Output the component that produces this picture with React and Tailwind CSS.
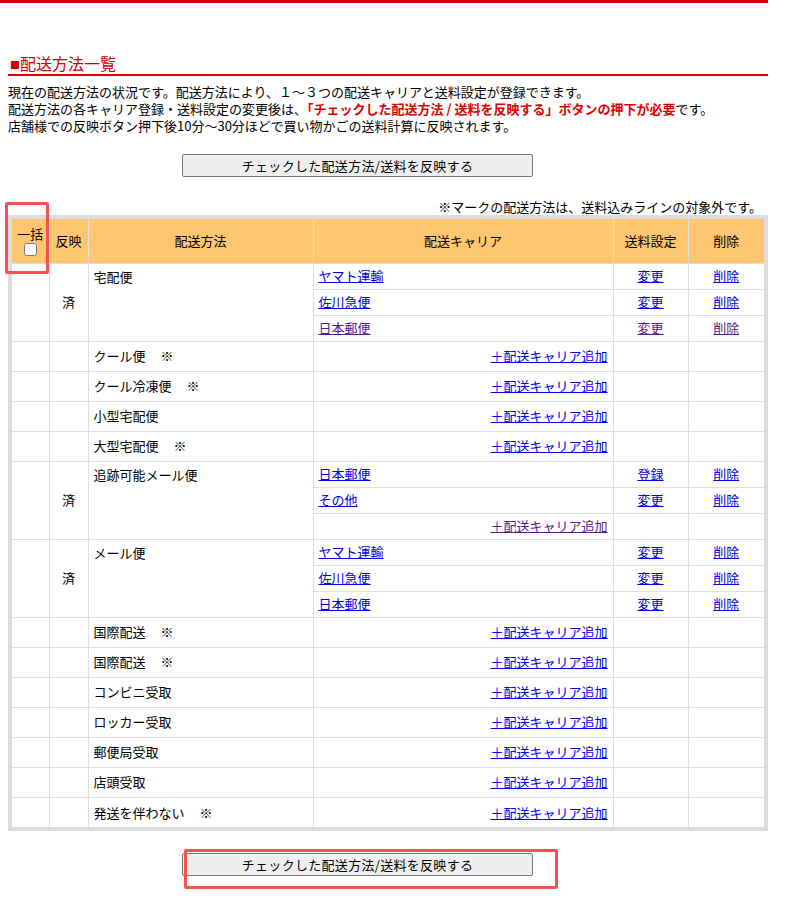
import React from 'react';

const JP = "font-['Meiryo','Noto_Sans_CJK_JP',sans-serif]";

const ROWS = [
  { name: '宅配便', done: true, carriers: [
    { label: 'ヤマト運輸', fee: '変更' },
    { label: '佐川急便', fee: '変更' },
    { label: '日本郵便', fee: '変更', visited: true },
  ] },
  { name: 'クール便', mark: true },
  { name: 'クール冷凍便', mark: true },
  { name: '小型宅配便' },
  { name: '大型宅配便', mark: true },
  { name: '追跡可能メール便', done: true, carriers: [
    { label: '日本郵便', fee: '登録' },
    { label: 'その他', fee: '変更' },
    { add: true, visited: true },
  ] },
  { name: 'メール便', done: true, carriers: [
    { label: 'ヤマト運輸', fee: '変更' },
    { label: '佐川急便', fee: '変更' },
    { label: '日本郵便', fee: '変更' },
  ] },
  { name: '国際配送', mark: true },
  { name: '国際配送', mark: true },
  { name: 'コンビニ受取' },
  { name: 'ロッカー受取' },
  { name: '郵便局受取' },
  { name: '店頭受取' },
  { name: '発送を伴わない', mark: true },
];

const cell = 'border border-[#dddddd] px-[5px]';

function Link({ children, visited }) {
  return (
    <a href="#" className={`underline ${visited ? 'text-[#551a8b]' : 'text-[#0000ee]'}`}>
      {children}
    </a>
  );
}

function MethodName({ row }) {
  return (
    <span>
      {row.name}
      {row.mark && <span className="ml-[15px]">※</span>}
    </span>
  );
}

function AddLink({ visited }) {
  return <Link visited={visited}>＋配送キャリア追加</Link>;
}

function GroupRows({ row }) {
  return row.carriers.map((c, i) => (
    <tr key={i} className="h-[26px]">
      {i === 0 && (
        <>
          <td rowSpan={3} className={cell}></td>
          <td rowSpan={3} className={`${cell} text-center`}>済</td>
          <td rowSpan={3} className={`${cell} align-top pt-[3px]`}>
            <MethodName row={row} />
          </td>
        </>
      )}
      {c.add ? (
        <>
          <td className={`${cell} text-right`}><AddLink visited={c.visited} /></td>
          <td className={cell}></td>
          <td className={cell}></td>
        </>
      ) : (
        <>
          <td className={cell}><Link visited={c.visited}>{c.label}</Link></td>
          <td className={`${cell} text-center`}><Link visited={c.visited}>{c.fee}</Link></td>
          <td className={`${cell} text-center`}><Link visited={c.visited}>削除</Link></td>
        </>
      )}
    </tr>
  ));
}

function SingleRow({ row }) {
  return (
    <tr className="h-[30px]">
      <td className={cell}></td>
      <td className={cell}></td>
      <td className={cell}><MethodName row={row} /></td>
      <td className={`${cell} text-right`}><AddLink /></td>
      <td className={cell}></td>
      <td className={cell}></td>
    </tr>
  );
}

function ApplyButton() {
  return (
    <button
      type="button"
      className="ml-[174px] w-[351px] h-[23px] bg-[#efefef] border border-[#767676] rounded-[2px] text-[13px] leading-none text-black tracking-[0.3px]"
    >
      チェックした配送方法/送料を反映する
    </button>
  );
}

export default function App() {
  return (
    <div className={`relative w-[787px] h-[899px] bg-white text-[13px] text-black ${JP}`}>
      <div className="w-[768px] h-[3px] bg-[#d40000]" />

      <div className="ml-[8px] w-[760px]">
        {/* heading */}
        <h2 className="mt-[51px] text-[16px] leading-[18px] text-[#d40000] pl-[2px] border-b-2 border-[#d40000]">
          <span className="text-[10px] align-[1px]">■</span>配送方法一覧
        </h2>

        <div className="mt-[7px] leading-[17px]">
          <p className="h-[17px]">現在の配送方法の状況です。配送方法により、１～３つの配送キャリアと送料設定が登録できます。</p>
          <p className="h-[17px]">
            配送方法の各キャリア登録・送料設定の変更後は、
            <span className="text-[#e00000] font-bold">「チェックした配送方法 / 送料を反映する」ボタンの押下が必要</span>
            です。
          </p>
          <p className="h-[17px]">店舗様での反映ボタン押下後10分～30分ほどで買い物かごの送料計算に反映されます。</p>
        </div>

        <div className="mt-[20px]">
          <ApplyButton />
        </div>

        <p className="mt-[21px] text-right pr-[6px] leading-[17px]">※マークの配送方法は、送料込みラインの対象外です。</p>

        {/* table */}
        <div className="border-4 border-[#dddddd]">
          <table className="w-full table-fixed border-collapse border-hidden">
            <colgroup>
              <col className="w-[37px]" />
              <col className="w-[39px]" />
              <col className="w-[225px]" />
              <col className="w-[300px]" />
              <col className="w-[75px]" />
              <col className="w-[76px]" />
            </colgroup>
            <thead>
              <tr className="h-[44px] bg-[#fdc66f]">
                <th className={`${cell} px-0 font-normal`}>
                  <div className="flex flex-col items-center leading-[15px] pt-[1px]">
                    <span>一括</span>
                    <input type="checkbox" className="w-[13px] h-[13px] mt-[2px]" />
                  </div>
                </th>
                <th className={`${cell} px-0 font-normal`}>反映</th>
                <th className={`${cell} font-normal`}>配送方法</th>
                <th className={`${cell} font-normal`}>配送キャリア</th>
                <th className={`${cell} px-0 font-normal`}>送料設定</th>
                <th className={`${cell} font-normal`}>削除</th>
              </tr>
            </thead>
            <tbody>
              {ROWS.map((row, i) =>
                row.carriers ? <GroupRows key={i} row={row} /> : <SingleRow key={i} row={row} />
              )}
            </tbody>
          </table>
        </div>

        <div className="mt-[22px]">
          <ApplyButton />
        </div>
      </div>

      {/* annotation boxes */}
      <div className="absolute left-[5px] top-[202px] w-[44px] h-[72px] border-[3px] border-[#f25454] rounded-[2px]" />
      <div className="absolute left-[184px] top-[849px] w-[374px] h-[40px] border-[3px] border-[#f25454] rounded-[2px]" />
    </div>
  );
}
